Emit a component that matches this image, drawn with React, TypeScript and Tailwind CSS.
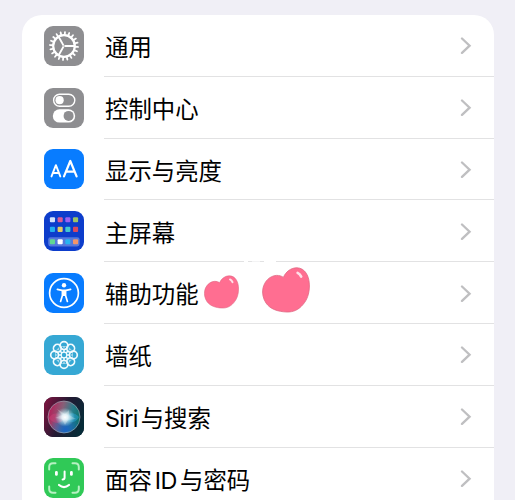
import React from 'react'

interface SettingsRowProps {
    label: React.ReactNode;
    icon: React.ReactNode;
    iconClass: string;
    last?: boolean;
}

const teeth = Array.from({ length: 20 }, (_, i) => i * 18)

const GearIcon = () => (
    <svg viewBox="0 0 40 40" className="size-10" fill="none" stroke="#fff">
        <circle cx="20" cy="20" r="10.8" strokeWidth="2.2" />
        {teeth.map((angle) => (
            <path key={angle} d="M20 9V6" strokeWidth="1.8" strokeLinecap="round" transform={`rotate(${angle + 4} 20 20)`} />
        ))}
        <path d="M20.5 20H31M19.6 19.6L14.5 10.5M19.6 20.4L14.5 29.5" strokeWidth="1.9" />
    </svg>
)

const TogglesIcon = () => (
    <svg viewBox="0 0 40 40" className="size-10">
        <rect x="9.6" y="6.2" width="21.2" height="12" rx="6" fill="none" stroke="#fff" strokeWidth="1.4" />
        <circle cx="15.6" cy="12.2" r="4.1" fill="#fff" />
        <rect x="8.8" y="21.2" width="22.4" height="13.4" rx="6.7" fill="#fff" />
        <circle cx="24.6" cy="27.9" r="5" fill="#8e8e91" />
    </svg>
)

const TextSizeIcon = () => (
    <svg viewBox="0 0 40 40" className="size-10" fill="none" stroke="#fff" strokeLinecap="round" strokeLinejoin="round">
        <path d="M7.5 27.4L11.9 16.2L16.3 27.4M9 24H14.8" strokeWidth="1.9" />
        <path d="M20 27.4L26.3 12L32.6 27.4M22.2 22.6H30.4" strokeWidth="2.2" />
    </svg>
)

const apps = [
    ['#d5e3fc', '#dc5b93', '#9c61f1', '#9dc465'],
    ['#22aef0', '#e3cb61', '#42c8cf', '#d84960'],
    ['#61d893', '#ffffff', '#27b4f0', '#f29569'],
]

const HomeScreenIcon = () => (
    <svg viewBox="0 0 40 40" className="size-10">
        <rect x="4.2" y="26.2" width="31.4" height="9.2" rx="2.4" fill="#5478dc" />
        {apps.map((row, y) =>
            row.map((fill, x) => (
                <rect
                    key={`${x}-${y}`}
                    x={5.9 + x * 7.7}
                    y={[6.2, 15.8, 28.2][y]}
                    width="5.1"
                    height="5.1"
                    rx="1"
                    fill={fill}
                />
            ))
        )}
    </svg>
)

const AccessibilityIcon = () => (
    <svg viewBox="0 0 40 40" className="size-10" fill="none" stroke="#fff" strokeLinecap="round" strokeLinejoin="round">
        <circle cx="20" cy="20" r="14.4" strokeWidth="1.7" />
        <circle cx="20" cy="12.2" r="2.2" fill="#fff" stroke="none" />
        <path d="M13.4 16.4L18 17.4H22L26.6 16.4M18.4 18V22.5L16.6 28.4M21.6 18V22.5L23.4 28.4" strokeWidth="1.7" />
        <path d="M18 17.5H22V23H18Z" fill="#fff" stroke="none" />
    </svg>
)

const petals = [0, 45, 90, 135, 180, 225, 270, 315]

const FlowerIcon = () => (
    <svg viewBox="0 0 40 40" className="size-10" fill="none" stroke="#f2fbfe" strokeWidth="1.7">
        {petals.map((angle) => (
            <g key={angle} transform={`rotate(${angle} 20 20)`}>
                <circle cx="20" cy="10.6" r="3.9" />
                <path d="M17.8 11H22.2L20 13.2Z" fill="#a5d7e9" stroke="none" />
                <path d="M20 14.5V17.2" strokeWidth="1.5" />
            </g>
        ))}
        <circle cx="20" cy="20" r="2.8" fill="#36a8d4" strokeWidth="1.2" />
    </svg>
)

const SiriIcon = () => (
    <svg viewBox="0 0 40 40" className="size-10">
        <defs>
            <linearGradient id="siri-bg" x1="0" y1="0.2" x2="1" y2="0.6">
                <stop offset="0" stopColor="#7a143f" />
                <stop offset="0.5" stopColor="#221a32" />
                <stop offset="1" stopColor="#062c38" />
            </linearGradient>
            <linearGradient id="siri-orb" x1="0" y1="0.35" x2="1" y2="0.6">
                <stop offset="0" stopColor="#b81c58" />
                <stop offset="0.4" stopColor="#876078" />
                <stop offset="0.7" stopColor="#297d8b" />
                <stop offset="1" stopColor="#087068" />
            </linearGradient>
            <radialGradient id="siri-blue" cx="0.55" cy="0.9" r="0.5">
                <stop offset="0" stopColor="#1a63c4" />
                <stop offset="1" stopColor="#1a63c4" stopOpacity="0" />
            </radialGradient>
            <radialGradient id="siri-glow">
                <stop offset="0" stopColor="#fff" />
                <stop offset="0.3" stopColor="#e9fbff" stopOpacity="0.9" />
                <stop offset="1" stopColor="#99dfed" stopOpacity="0" />
            </radialGradient>
        </defs>
        <rect width="40" height="40" fill="url(#siri-bg)" />
        <circle cx="20" cy="20" r="16" fill="url(#siri-orb)" />
        <circle cx="20" cy="20" r="16" fill="url(#siri-blue)" />
        <path d="M5 21C9 14 16 16 21 21C16 28 9 27 5 21Z" fill="#d9417e" fillOpacity="0.4" />
        <path d="M20 21C26 14 31 16 35 20C32 26 26 27 20 21Z" fill="#28a6da" fillOpacity="0.5" />
        <ellipse cx="21" cy="20.2" rx="10" ry="9.5" fill="url(#siri-glow)" />
        <path d="M13 12L21 17L25 13L25 18L32 22L24 23L21 28L18 22L11 21L18 18Z" fill="#fff" fillOpacity="0.25" />
        <circle cx="20" cy="20" r="16" fill="none" stroke="#a3aebb" strokeOpacity="0.7" strokeWidth="0.9" />
    </svg>
)

const FaceIcon = () => (
    <svg viewBox="0 0 40 40" className="size-10" fill="none" stroke="#fff" strokeWidth="2" strokeLinecap="round">
        <path
            d="M5.2 11.5V9Q5.2 5.2 9 5.2H11.5M28.5 5.2H31Q34.8 5.2 34.8 9V11.5M34.8 28.5V31Q34.8 34.8 31 34.8H28.5M11.5 34.8H9Q5.2 34.8 5.2 31V28.5"
            stroke="#b6f1c2"
        />
        <path d="M12.4 14.3V16.4M27.4 14.3V16.4" strokeWidth="2.8" />
        <path d="M20.6 13.6V19.6Q20.6 21.6 18.6 21.6" />
        <path d="M15 27Q20 31.2 25 27" strokeWidth="2.2" />
    </svg>
)

const Chevron = () => (
    <svg viewBox="0 0 12 18" className="mr-[22px] h-[18px] w-3" fill="none" stroke="#bfbfc1" strokeWidth="2.3" strokeLinecap="round">
        <path d="M2 1.5L9.6 8.7L2 15.9" />
    </svg>
)

const Heart: React.FC<{ className: string }> = ({ className }) => (
    <svg viewBox="0 0 48 46" className={className}>
        <path
            d="M21.4 10.4C23.5 5 29 0.6 35 0.8C43 1 47.5 9 47.4 19C47.3 27 45 33 41 37.5C36.5 43 31 45.2 25 45C16 44.8 8 42 4 36C1 31.5 0 26 0.9 21.5C2.4 14 8 8.8 14.5 8.4C17.5 8.3 19.5 9 21.4 10.4Z"
            fill="#ff6e91"
            stroke="#df6883"
            strokeWidth="0.8"
        />
        <path d="M35.6 5.8Q38 7 39.2 9.6" stroke="#ffe0e8" strokeWidth="2.6" strokeLinecap="round" fill="none" />
    </svg>
)

const SettingsRow: React.FC<SettingsRowProps> = ({ label, icon, iconClass, last }) => (
    <div className="flex h-[61.8px] items-center pl-[22px]">
        <div className={`size-10 flex-none overflow-hidden rounded-[9px] ${iconClass}`}>{icon}</div>
        <div className={`ml-5 flex h-full flex-1 items-center justify-between border-b pt-0.5 ${last ? 'border-transparent' : 'border-[#e2e2e3]'}`}>
            <span className="whitespace-nowrap pl-px pt-[3px] text-[23.4px] leading-none">{label}</span>
            <Chevron />
        </div>
    </div>
)

const App: React.FC = () => {
    return (
        <div className="relative h-[500px] w-[515px] overflow-hidden bg-[#f0eff6] pt-[15px] font-['Inter','Noto_Sans_CJK_SC',sans-serif] text-black">
            <main className="ml-[22px] w-[471.5px] rounded-t-[20px] bg-white">
                <SettingsRow label="通用" icon={<GearIcon />} iconClass="bg-[#8e8e91]" />
                <SettingsRow label="控制中心" icon={<TogglesIcon />} iconClass="bg-[#8e8e91]" />
                <SettingsRow label="显示与亮度" icon={<TextSizeIcon />} iconClass="bg-[#087cff]" />
                <SettingsRow label="主屏幕" icon={<HomeScreenIcon />} iconClass="bg-[#0d3dcb]" />
                <SettingsRow label="辅助功能" icon={<AccessibilityIcon />} iconClass="bg-[#087cff]" />
                <SettingsRow label="墙纸" icon={<FlowerIcon />} iconClass="bg-[#36a8d4]" />
                <SettingsRow
                    label={<><span className="mr-[3px] tracking-[-0.03em]">Siri</span>与搜索</>}
                    icon={<SiriIcon />}
                    iconClass="bg-[#221a32]"
                />
                <SettingsRow
                    label={<>面容<span className="mx-[3px] tracking-[-0.02em]">ID</span>与密码</>}
                    icon={<FaceIcon />}
                    iconClass="bg-[#30c957]"
                    last
                />
            </main>

            {/* Worn spots in the divider above the stickers */}
            <div className="absolute left-[244px] top-[260px] flex h-1 gap-1">
                <span className="w-1 bg-white" />
                <span className="w-2 bg-white/60" />
                <span className="w-3 bg-white" />
            </div>

            {/* Heart stickers next to the accessibility row */}
            <Heart className="absolute left-[204px] top-[275px] h-[34px] w-[35px]" />
            <Heart className="absolute left-[262px] top-[267px] h-[46px] w-12" />
        </div>
    )
}

export default App
